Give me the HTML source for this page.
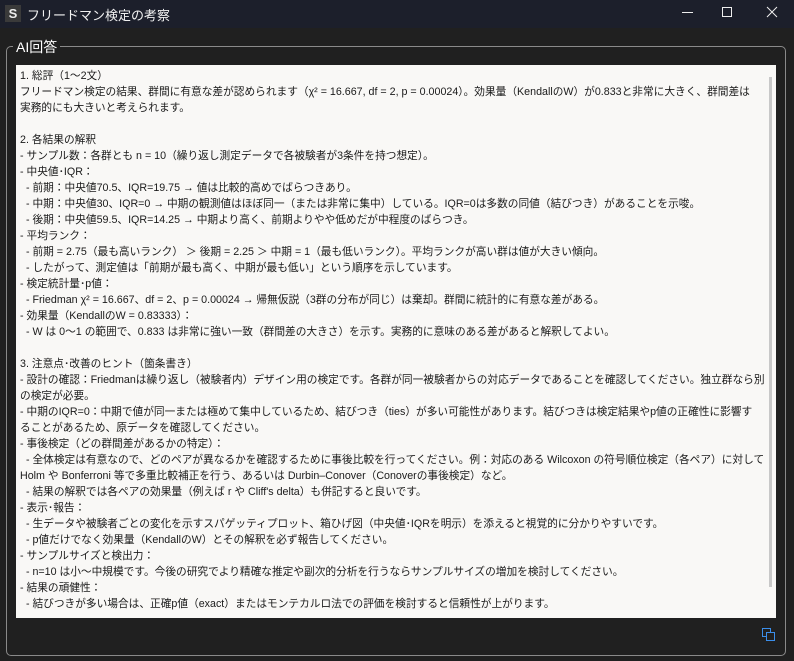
<!DOCTYPE html>
<html><head><meta charset="utf-8"><style>
html,body{margin:0;padding:0;width:794px;height:661px;overflow:hidden;background:#202020;font-family:"Liberation Sans","Noto Sans CJK JP",sans-serif;}
.tb{position:absolute;left:0;top:0;width:794px;height:28px;background:#1c1f2b;color:#fff;}
.logo{position:absolute;left:5px;top:5px;width:16px;height:17px;background:#3a3a3a;color:#eee;font-size:13px;font-weight:bold;text-align:center;line-height:17px;}
.title{position:absolute;left:27px;top:5px;font-size:13px;color:#f0f0f0;}
.ctl{position:absolute;top:0;height:28px;color:#eee;}
.gb{position:absolute;left:6px;top:46px;width:778px;height:608px;border:1px solid #8a8a8a;border-radius:5px;}
.lbl{position:absolute;left:13px;top:37px;background:#202020;color:#fff;font-size:14px;padding:0 3px;}
.ta{position:absolute;left:16px;top:65px;width:760px;height:553px;background:#f9f8f6;overflow:hidden;}
.sb{position:absolute;left:753px;top:12px;width:3px;height:510px;background:#c8c8c8;}
.txt{position:absolute;left:4px;top:3px;font-size:10.7px;line-height:16px;color:#1a1a1a;white-space:pre;}
</style></head><body>
<div class="tb"><div class="logo">S</div><div class="title">フリードマン検定の考察</div>
<svg class="ctl" style="left:670px" width="124" height="28"><line x1="12" y1="12.5" x2="23" y2="12.5" stroke="#eee" stroke-width="1"/><rect x="52.5" y="7.5" width="9" height="9" fill="none" stroke="#eee"/><path d="M97 7 L107 17 M107 7 L97 17" stroke="#eee" stroke-width="1"/></svg></div>
<div class="gb"></div><div class="lbl">AI回答</div>
<div class="ta"><div class="sb"></div><div class="txt">1. 総評（1〜2文）
フリードマン検定の結果、群間に有意な差が認められます（χ² = 16.667, df = 2, p = 0.00024）。効果量（KendallのW）が0.833と非常に大きく、群間差は
実務的にも大きいと考えられます。

2. 各結果の解釈
- サンプル数：各群とも n = 10（繰り返し測定データで各被験者が3条件を持つ想定）。
- 中央値･IQR：
  - 前期：中央値70.5、IQR=19.75 → 値は比較的高めでばらつきあり。
  - 中期：中央値30、IQR=0 → 中期の観測値はほぼ同一（または非常に集中）している。IQR=0は多数の同値（結びつき）があることを示唆。
  - 後期：中央値59.5、IQR=14.25 → 中期より高く、前期よりやや低めだが中程度のばらつき。
- 平均ランク：
  - 前期 = 2.75（最も高いランク） ＞ 後期 = 2.25 ＞ 中期 = 1（最も低いランク）。平均ランクが高い群は値が大きい傾向。
  - したがって、測定値は「前期が最も高く、中期が最も低い」という順序を示しています。
- 検定統計量･p値：
  - Friedman χ² = 16.667、df = 2、p = 0.00024 → 帰無仮説（3群の分布が同じ）は棄却。群間に統計的に有意な差がある。
- 効果量（KendallのW = 0.83333）：
  - W は 0〜1 の範囲で、0.833 は非常に強い一致（群間差の大きさ）を示す。実務的に意味のある差があると解釈してよい。

3. 注意点･改善のヒント（箇条書き）
- 設計の確認：Friedmanは繰り返し（被験者内）デザイン用の検定です。各群が同一被験者からの対応データであることを確認してください。独立群なら別
の検定が必要。
- 中期のIQR=0：中期で値が同一または極めて集中しているため、結びつき（ties）が多い可能性があります。結びつきは検定結果やp値の正確性に影響す
ることがあるため、原データを確認してください。
- 事後検定（どの群間差があるかの特定）：
  - 全体検定は有意なので、どのペアが異なるかを確認するために事後比較を行ってください。例：対応のある Wilcoxon の符号順位検定（各ペア）に対して
Holm や Bonferroni 等で多重比較補正を行う、あるいは Durbin–Conover（Conoverの事後検定）など。
  - 結果の解釈では各ペアの効果量（例えば r や Cliff's delta）も併記すると良いです。
- 表示･報告：
  - 生データや被験者ごとの変化を示すスパゲッティプロット、箱ひげ図（中央値･IQRを明示）を添えると視覚的に分かりやすいです。
  - p値だけでなく効果量（KendallのW）とその解釈を必ず報告してください。
- サンプルサイズと検出力：
  - n=10 は小〜中規模です。今後の研究でより精確な推定や副次的分析を行うならサンプルサイズの増加を検討してください。
- 結果の頑健性：
  - 結びつきが多い場合は、正確p値（exact）またはモンテカルロ法での評価を検討すると信頼性が上がります。</div></div>
<svg style="position:absolute;left:762px;top:628px" width="14" height="14"><rect x="0.5" y="0.5" width="8" height="8" fill="none" stroke="#3b8eea"/><rect x="4.5" y="4.5" width="8" height="8" fill="#202020" stroke="#3b8eea"/></svg>
</body></html>
